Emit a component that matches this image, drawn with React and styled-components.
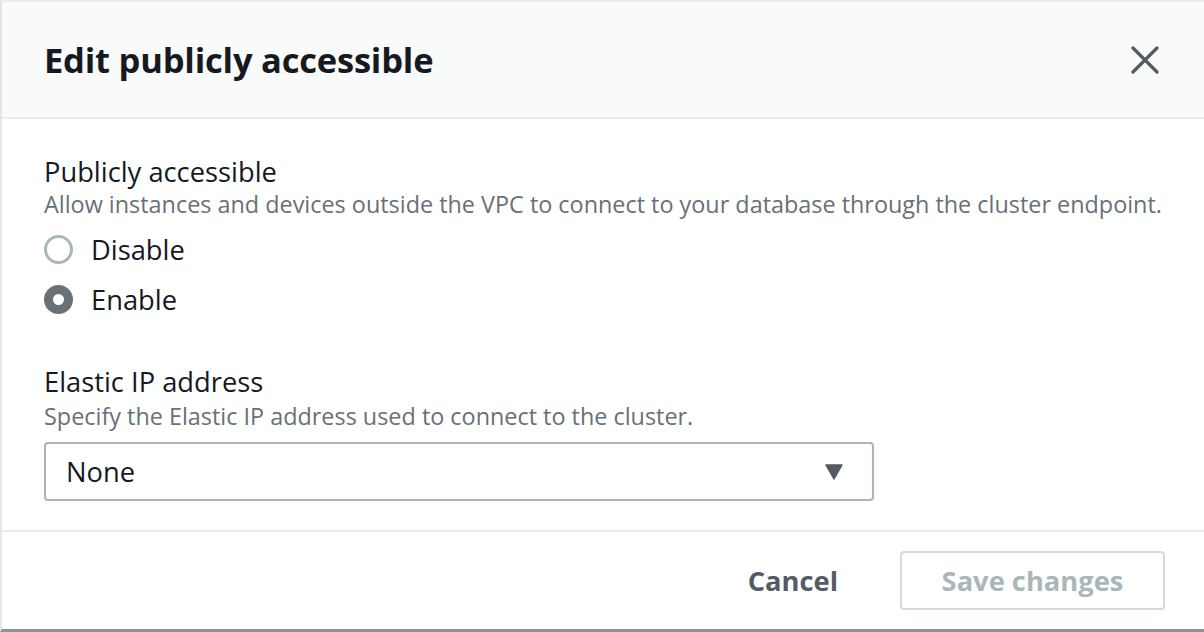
import React from "react";
import styled, { createGlobalStyle } from "styled-components";

const Global = createGlobalStyle`
  html, body { margin: 0; padding: 0; background: #ffffff; }
  body { font-family: "Open Sans", "Noto Sans", "Liberation Sans", sans-serif; color: #16191f; }
  * { box-sizing: border-box; }
`;

const Modal = styled.div`
  width: 1204px;
  height: 632px;
  display: flex;
  flex-direction: column;
  background: #ffffff;
  border-top: 2px solid #eaeded;
  border-left: 2px solid #e3e6e6;
  border-bottom: 3px solid #879596;
`;

const Header = styled.header`
  height: 117px;
  flex: none;
  display: flex;
  align-items: center;
  justify-content: space-between;
  padding: 0 44px 0 42px;
  background: #f9fafa;
  border-bottom: 2px solid #eaeded;
`;

const Title = styled.h1`
  margin: 0;
  font-size: 34.5px;
  font-weight: 700;
  letter-spacing: -0.2px;
  color: #16191f;
`;

const CloseButton = styled.button`
  border: 0;
  background: transparent;
  padding: 0;
  width: 30px;
  height: 30px;
  display: flex;
  align-items: center;
  justify-content: center;
  cursor: pointer;
`;

const Body = styled.section`
  flex: 1;
  padding: 36px 42px 0 42px;
  border-bottom: 2px solid #eaeded;
`;

const Field = styled.div`
  display: flex;
  flex-direction: column;
  margin-bottom: ${(p) => p.$gap || 0}px;
`;

const Label = styled.div`
  font-size: 27.3px;
  line-height: 34px;
  color: #16191f;
`;

const Description = styled.div`
  font-size: 23.4px;
  line-height: 30px;
  margin-top: ${(p) => p.$offset || 0}px;
  color: #687078;
`;

const RadioGroup = styled.div`
  display: flex;
  flex-direction: column;
  margin-top: 5px;
`;

const RadioRow = styled.label`
  height: 50px;
  display: flex;
  align-items: center;
  gap: 18px;
  font-size: 27.3px;
  color: #16191f;
`;

const RadioCircle = styled.span`
  width: 29px;
  height: 29px;
  border-radius: 50%;
  flex: none;
  border: ${(p) => (p.$checked ? "9px solid #687078" : "3px solid #aab7b8")};
  background: #ffffff;
`;

const Select = styled.div`
  margin-top: 11px;
  width: 830px;
  height: 59px;
  border: 2px solid #aab7b8;
  border-radius: 4px;
  display: flex;
  align-items: center;
  justify-content: space-between;
  padding: 0 29px 0 20px;
  font-size: 27.3px;
  color: #16191f;
`;

const Footer = styled.footer`
  height: 97px;
  flex: none;
  display: flex;
  align-items: center;
  justify-content: flex-end;
  gap: 62px;
  padding: 0 39px 0 0;
`;

const LinkButton = styled.button`
  border: 0;
  background: transparent;
  font-family: inherit;
  font-size: 27.3px;
  font-weight: 700;
  color: #545b64;
  padding: 0;
  cursor: pointer;
`;

const PrimaryButton = styled.button`
  width: 265px;
  height: 59px;
  border: 2px solid #d5dbdb;
  border-radius: 4px;
  background: #ffffff;
  font-family: inherit;
  font-size: 27.3px;
  font-weight: 700;
  color: #aab7b8;
`;

export default function App() {
  return (
    <>
      <Global />
      <Modal>
        <Header>
          <Title>Edit publicly accessible</Title>
          <CloseButton aria-label="Close">
            <svg width="28" height="28" viewBox="0 0 28 28">
              <path d="M2 2 L26 26 M26 2 L2 26" stroke="#545b64" strokeWidth="3.2" strokeLinecap="round" />
            </svg>
          </CloseButton>
        </Header>
        <Body>
          <Field $gap={41}>
            <Label>Publicly accessible</Label>
            <Description>
              Allow instances and devices outside the VPC to connect to your database through the cluster endpoint.
            </Description>
            <RadioGroup>
              <RadioRow>
                <RadioCircle />
                Disable
              </RadioRow>
              <RadioRow>
                <RadioCircle $checked />
                Enable
              </RadioRow>
            </RadioGroup>
          </Field>
          <Field>
            <Label>Elastic IP address</Label>
            <Description $offset={2}>Specify the Elastic IP address used to connect to the cluster.</Description>
            <Select>
              <span>None</span>
              <svg width="18" height="16" viewBox="0 0 18 16">
                <path d="M1 1 L17 1 L9 15 Z" fill="#545b64" stroke="#545b64" strokeWidth="1.5" strokeLinejoin="round" />
              </svg>
            </Select>
          </Field>
        </Body>
        <Footer>
          <LinkButton>Cancel</LinkButton>
          <PrimaryButton disabled>Save changes</PrimaryButton>
        </Footer>
      </Modal>
    </>
  );
}
